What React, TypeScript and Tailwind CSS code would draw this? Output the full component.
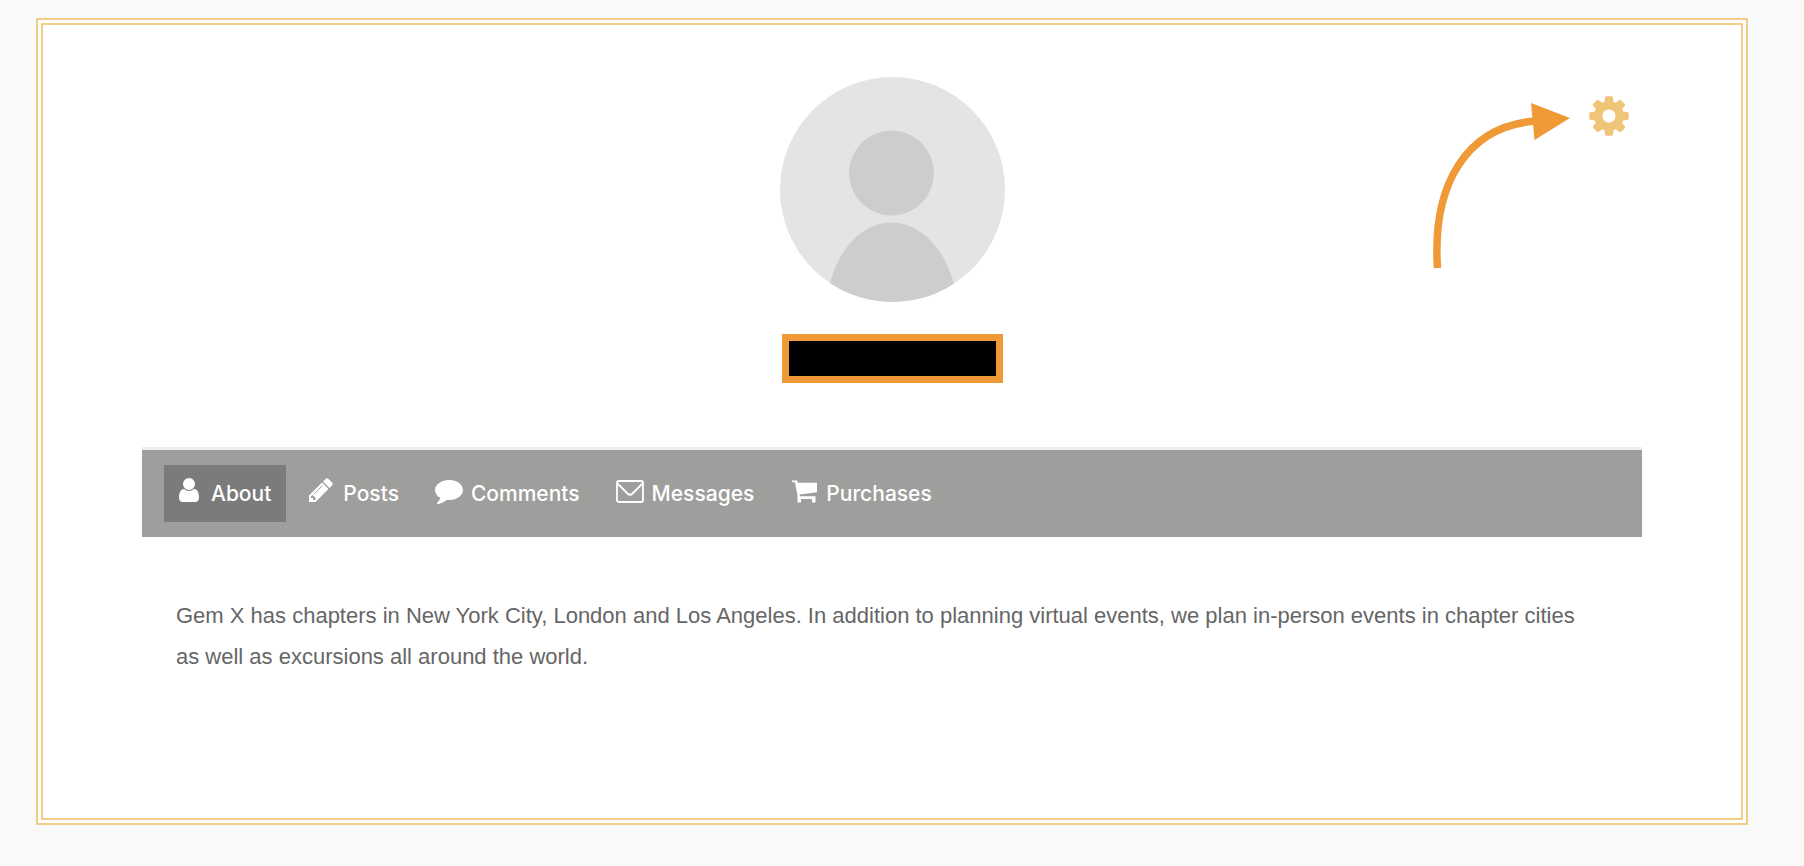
import { clsx } from "clsx"
import { ReactNode, useState } from "react"

type Tab = {
	id: string,
	label: string,
	icon: ReactNode
}

const tabIconStyle = "mb-2 size-7 shrink-0"

const UserIcon = () => (
	<svg viewBox="0 0 1792 1792" fill="currentColor" aria-hidden="true" className={tabIconStyle}>
		<path d="M1536 1399q0 109-62.5 187t-150.5 78h-854q-88 0-150.5-78t-62.5-187q0-85 8.5-160.5t31.5-152 58.5-131 94-89 134.5-34.5q131 128 313 128t313-128q76 0 134.5 34.5t94 89 58.5 131 31.5 152 8.5 160.5zm-256-887q0 159-112.5 271.5t-271.5 112.5-271.5-112.5-112.5-271.5 112.5-271.5 271.5-112.5 271.5 112.5 112.5 271.5z" />
	</svg>
)

const PencilIcon = () => (
	<svg viewBox="0 0 1792 1792" fill="currentColor" aria-hidden="true" className={tabIconStyle}>
		<path d="M491 1536l91-91-235-235-91 91v107h128v128h107zm523-928q0-22-22-22-10 0-17 7l-542 542q-7 7-7 17 0 22 22 22 10 0 17-7l542-542q7-7 7-17zm-54-192l416 416-832 832h-416v-416zm683 96q0 53-37 90l-166 166-416-416 166-165q36-38 90-38 53 0 91 38l235 234q37 39 37 91z" />
	</svg>
)

const CommentIcon = () => (
	<svg viewBox="0 0 1792 1792" fill="currentColor" aria-hidden="true" className={tabIconStyle}>
		<path d="M1792 896q0 174-120 321.5t-326 233-450 85.5q-70 0-145-8-198 175-460 242-49 14-114 22-17 2-30.5-9t-17.5-29v-1q-3-4-.5-12t2-10 4.5-9.5l6-9 7-8.5 8-9q7-8 31-34.5t34.5-38 31-39.5 32.5-51 27-59 26-76q-157-89-247.5-220t-90.5-281q0-130 71-248.5t191-204.5 286-136.5 348-50.5q244 0 450 85.5t326 233 120 321.5z" />
	</svg>
)

const EnvelopeIcon = () => (
	<svg viewBox="0 0 28 28" fill="none" stroke="currentColor" strokeWidth="1.8" aria-hidden="true" className={tabIconStyle}>
		<rect x="1" y="5" width="26" height="21" rx="1.8" />
		<path d="M1.500 7.500L11.500 17.500Q14 20 16.500 17.500L26.500 7.500" />
	</svg>
)

const CartIcon = () => (
	<svg viewBox="0 0 28 28" fill="currentColor" aria-hidden="true" className={tabIconStyle}>
		<path d="M2 4.500H7.200L7.900 6.700H27V16.200L9.700 18.600L10 20.300H25.500V26.500H22V23H11V26.500H7.500V19.500L5 6.300H2Z" />
	</svg>
)

const CogIcon = () => (
	<svg viewBox="0 0 1792 1792" fill="currentColor" aria-hidden="true" className="size-[46px]">
		<path d="M1152 896q0-106-75-181t-181-75-181 75-75 181 75 181 181 75 181-75 75-181zm512-109v222q0 12-8 23t-20 13l-185 28q-19 54-39 91 35 50 107 138 10 12 10 25t-9 23q-27 37-99 108t-94 71q-12 0-26-9l-138-108q-44 23-91 38-16 136-29 186-7 28-36 28h-222q-14 0-24.5-8.5t-11.5-21.5l-28-184q-49-16-90-37l-141 107q-10 9-25 9-14 0-25-11-126-114-165-168-7-10-7-23 0-12 8-23 15-21 51-66.5t54-70.5q-27-50-41-99l-183-27q-13-2-21-12.5t-8-23.5v-222q0-12 8-23t19-13l186-28q14-46 39-92-40-57-107-138-10-12-10-24 0-10 9-23 26-36 98.5-107.5t94.5-71.5q13 0 26 10l138 107q44-23 91-38 16-136 29-186 7-28 36-28h222q14 0 24.5 8.5t11.5 21.5l28 184q49 16 90 37l142-107q9-9 24-9 13 0 25 10 129 119 165 170 7 8 7 22 0 12-8 23-15 21-51 66.5t-54 70.5q26 50 41 98l183 28q13 2 21 12.5t8 23.5z" />
	</svg>
)

const TABS: Tab[] = [
	{ id: "about", label: "About", icon: <UserIcon /> },
	{ id: "posts", label: "Posts", icon: <PencilIcon /> },
	{ id: "comments", label: "Comments", icon: <CommentIcon /> },
	{ id: "messages", label: "Messages", icon: <EnvelopeIcon /> },
	{ id: "purchases", label: "Purchases", icon: <CartIcon /> }
]

const Avatar = () => (
	<svg viewBox="0 0 225 225" className="w-full" role="img" aria-label="Profile photo">
		<clipPath id="avatar-clip">
			<circle cx="112.5" cy="112.5" r="112.5" />
		</clipPath>
		<g clipPath="url(#avatar-clip)">
			<rect width="225" height="225" fill="#e4e4e4" />
			<circle cx="111.5" cy="96" r="42.5" fill="#cdcdcd" />
			<path d="M48 215C56 172 83 145.500 111.500 145.500S167 172 176 215V225H48Z" fill="#cdcdcd" />
		</g>
	</svg>
)

const Arrow = () => (
	<svg viewBox="0 0 138 168" className="mt-2 w-[138px] shrink-0" aria-hidden="true">
		<path d="M5.500 167C0 84 34 25 104 20" fill="none" stroke="#f09a37" strokeWidth="7.500" />
		<path d="M99 2L138 17L102.500 39Z" fill="#f09a37" />
	</svg>
)

const App = () => {
	const [activeTab, setActiveTab] = useState<string>(TABS[0].id)

	return (
		<div className="flex min-h-screen flex-col bg-[#f9f9f9] pt-[18px] pr-14 pb-[41px] pl-9">
			<div className="flex grow flex-col border-2 border-[#f2cd86] bg-white p-[3px]">
				<main className="grow border-2 border-[#f2cd86] px-[99px] pt-[52px]">
					<header className="grid grid-cols-[1fr_225px_1fr] pb-16">
						<div className="col-start-2 flex flex-col items-center gap-8">
							<Avatar />
							<div className="h-[49px] w-[221px] border-7 border-[#f09a37] bg-black" />
						</div>
						<div className="flex items-start justify-end gap-4 pt-4 pr-2.5">
							<Arrow />
							<button type="button" aria-label="Profile settings" className="cursor-pointer text-[#f0c578]">
								<CogIcon />
							</button>
						</div>
					</header>
					<nav className="flex flex-wrap gap-2.5 border-t-3 border-[#eeeeee] bg-[#9e9e9c] px-[22px] py-[15px] font-['Inter',sans-serif]">
						{
							TABS.map(tab => (
								<a
									key={tab.id}
									href={`#${tab.id}`}
									onClick={() => setActiveTab(tab.id)}
									className={clsx(
										"flex h-[57px] items-center gap-2 pr-[15px] pl-[11px] text-[21px] font-medium text-white",
										activeTab === tab.id && "bg-[#7b7b7b]"
									)}
								>
									{tab.icon}
									<span>{tab.label}</span>
								</a>
							))
						}
					</nav>
					<p className="pt-[58px] pr-14 pl-[34px] font-['Liberation_Sans',Arial,sans-serif] text-[22px] leading-[41px] text-[#666666]">
						Gem X has chapters in New York City, London and Los Angeles. In addition to planning virtual events, we plan in-person events in chapter cities as well as excursions all around the world.
					</p>
				</main>
			</div>
		</div>
	)
}

export default App
